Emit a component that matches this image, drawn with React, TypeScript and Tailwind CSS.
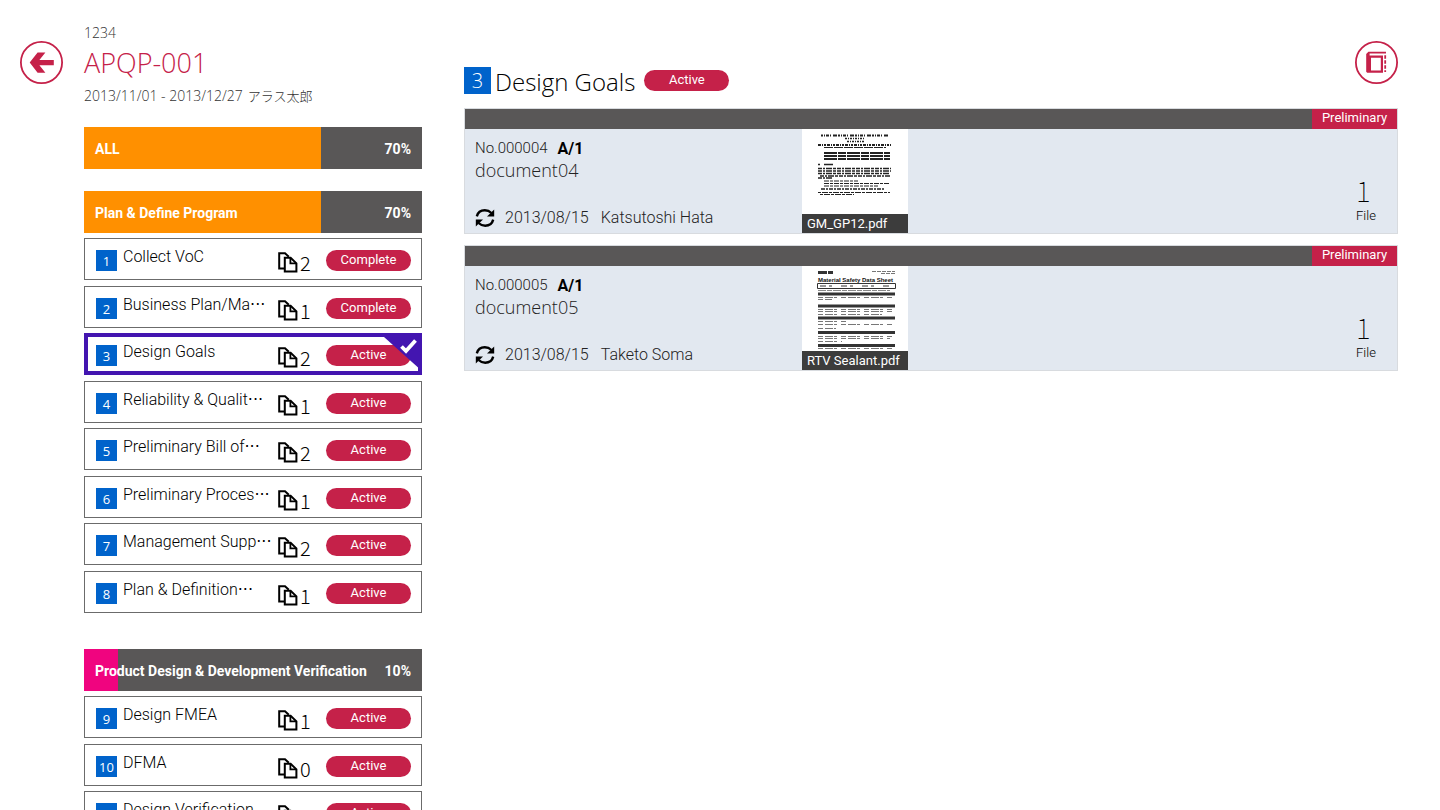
import React, { useState } from 'react';

interface Task {
  no: number;
  name: string;
  more?: boolean;
  files: number;
  status: string;
}

interface Phase {
  name: string;
  progress: number;
  color: string;
  tasks: Task[];
}

interface Doc {
  no: string;
  rev: string;
  name: string;
  date: string;
  owner: string;
  state: string;
  fileName: string;
  fileCount: number;
}

const PHASES: Phase[] = [
  {
    name: 'Plan & Define Program',
    progress: 70,
    color: 'bg-[#ff9000]',
    tasks: [
      { no: 1, name: 'Collect VoC', files: 2, status: 'Complete' },
      { no: 2, name: 'Business Plan/Ma', more: true, files: 1, status: 'Complete' },
      { no: 3, name: 'Design Goals', files: 2, status: 'Active' },
      { no: 4, name: 'Reliability & Qualit', more: true, files: 1, status: 'Active' },
      { no: 5, name: 'Preliminary Bill of', more: true, files: 2, status: 'Active' },
      { no: 6, name: 'Preliminary Proces', more: true, files: 1, status: 'Active' },
      { no: 7, name: 'Management Supp', more: true, files: 2, status: 'Active' },
      { no: 8, name: 'Plan & Definition', more: true, files: 1, status: 'Active' },
    ],
  },
  {
    name: 'Product Design & Development Verification',
    progress: 10,
    color: 'bg-[#f0047f]',
    tasks: [
      { no: 9, name: 'Design FMEA', files: 1, status: 'Active' },
      { no: 10, name: 'DFMA', files: 0, status: 'Active' },
      { no: 11, name: 'Design Verification', files: 1, status: 'Active' },
    ],
  },
];

const DOCS: Doc[] = [
  {
    no: 'No.000004',
    rev: 'A/1',
    name: 'document04',
    date: '2013/08/15',
    owner: 'Katsutoshi Hata',
    state: 'Preliminary',
    fileName: 'GM_GP12.pdf',
    fileCount: 1,
  },
  {
    no: 'No.000005',
    rev: 'A/1',
    name: 'document05',
    date: '2013/08/15',
    owner: 'Taketo Soma',
    state: 'Preliminary',
    fileName: 'RTV Sealant.pdf',
    fileCount: 1,
  },
];

const BackIcon = () => (
  <svg width="43" height="43" viewBox="0 0 43 43" aria-hidden="true">
    <circle cx="21.5" cy="21.5" r="20.6" fill="none" stroke="#c52149" strokeWidth="1.8" />
    <path d="M9.7 21.6 17.6 11.6H25.4L19.4 19H33.8V24.2H19.4L25.4 31.7H17.6Z" fill="#c52149" />
  </svg>
);

const BookIcon = () => (
  <svg width="43" height="43" viewBox="0 0 43 43" fill="none" stroke="#c52149" aria-hidden="true">
    <circle cx="21.5" cy="21.5" r="20.6" strokeWidth="1.8" />
    <path d="M13.4 10.8H31V12.6H14.6V14.6H28V31.8H12.2L11.2 30.8V13ZM16 16.8V29.6H25.8V16.8Z" fill="#c52149" fillRule="evenodd" stroke="none" />
    <path d="M30.2 14.2V31" strokeWidth="1.8" strokeDasharray="3.6 1.4" />
  </svg>
);

const FilesIcon = () => (
  <svg width="20" height="21" viewBox="0 0 20 21" fill="none" stroke="#000" strokeWidth="2" aria-hidden="true">
    <path d="M6 16.4H1.2V1.2H7L10.8 4.8" />
    <path d="M6.8 5.8H12.6L18.4 11.4V19.6H6.8Z" fill="#fff" />
    <path d="M12.4 6V11.4H18.2" strokeWidth="1.8" />
  </svg>
);

const RefreshIcon = () => (
  <svg width="20" height="20" viewBox="0 0 20 20" fill="none" stroke="#000" strokeWidth="2.4" aria-hidden="true">
    <path d="M1.8 8.4C2.8 4.4 6 2.3 9.8 2.3C12.6 2.3 14.6 3.2 16.4 5" />
    <path d="M18.2 11.6C17.2 15.6 14 17.7 10.2 17.7C7.4 17.7 5.4 16.8 3.6 15" />
    <path d="M19.2 1.4V8.6H12Z" fill="#000" stroke="none" />
    <path d="M0.8 18.6V11.4H8Z" fill="#000" stroke="none" />
  </svg>
);

const SpecThumb = () => (
  <svg width="106" height="104" viewBox="0 0 106 104" stroke="#222" aria-hidden="true">
    <rect width="106" height="104" fill="#fff" stroke="none" />
    <path d="M19 6.5H87" strokeWidth="2" strokeDasharray="2 1 1 1 3 1 1 2 4 1" />
    <path d="M43 9.5H63M45 12.5H62" strokeWidth="1.5" strokeDasharray="2 1 1 1" />
    <path d="M16 16H89" strokeWidth="2" strokeDasharray="3 1 1 1 2 1" />
    <path d="M22 18.5H84" strokeWidth="1" strokeDasharray="9 1" />
    <path d="M22 24H88M22 27H88M22 30H88" strokeWidth="2" strokeDasharray="13 1 8 1" />
    <path d="M16 35.5H18M22 35.5H31" strokeWidth="1.6" />
    <path d="M16 39.5H89M16 42H89M16 44.5H87M18 47H88M16 49H30" strokeWidth="1.3" strokeDasharray="4 1 2 1 6 1 3 1" />
    <path d="M22 52H56M22 54.5H87M22 57H76" strokeWidth="1.2" strokeDasharray="5 1 3 1" />
    <path d="M19 60H83" strokeWidth="1.5" strokeDasharray="4 1 2 1" />
    <path d="M16 63.5H88M18 65.5H52" strokeWidth="1" strokeDasharray="3 1 6 1" />
  </svg>
);

const SheetThumb = () => (
  <svg width="106" height="104" viewBox="0 0 106 104" stroke="#333" aria-hidden="true">
    <rect width="106" height="104" fill="#fff" stroke="none" />
    <path d="M16 6.5H31" strokeWidth="3" strokeDasharray="9 1" />
    <path d="M70 5.5H93M79 7.5H93" strokeWidth="1" strokeDasharray="4 1" stroke="#777" />
    <text x="16" y="15.5" fontSize="6" fontWeight="bold" fontFamily="Liberation Sans, sans-serif" fill="#111" stroke="none">
      Material Safety Data Sheet
    </text>
    <path d="M15.5 17.5H93.5V22.5H15.5Z" fill="none" strokeWidth="1" />
    <path d="M18 20H90" strokeWidth="1" strokeDasharray="6 3 3 9" />
    <path d="M16 24.5H88" strokeWidth="1" strokeDasharray="8 1 5 1" stroke="#888" />
    <path d="M16 28H93M16 40H93M16 52H93M16 66.5H93M16 79.5H93" strokeWidth="3" />
    <path
      d="M16 31.5H92M16 33.5H30M16 43.5H92M16 45.5H92M16 48.5H80M16 55.5H45M16 58.5H92M16 62.5H34M16 70.5H92M16 72.5H88M16 75.5H40M16 82.5H90"
      strokeWidth="1"
      strokeDasharray="5 2 8 1 3 4"
      stroke="#777"
    />
  </svg>
);

const StatusPill: React.FC<{ label: string }> = ({ label }) => (
  <span className="h-[21px] w-[85px] shrink-0 rounded-[11px] bg-[#c52149] text-center text-[13px] leading-[19px] text-white">
    {label}
  </span>
);

const ProgressBar: React.FC<{ name: string; progress: number; color: string }> = ({ name, progress, color }) => (
  <div className="relative flex h-[42px] items-center justify-between bg-[#595757] px-[11px] pt-px text-sm font-bold text-white">
    <div className={`absolute inset-y-0 left-0 ${color}`} style={{ width: `${progress}%` }} />
    <span className="relative whitespace-nowrap">{name}</span>
    <span className="relative">{progress}%</span>
  </div>
);

const TaskRow: React.FC<{ task: Task; selected: boolean; onSelect: () => void }> = ({ task, selected, onSelect }) => (
  <li className="odd:mb-[6px] even:mb-[5px]">
    <button
      onClick={onSelect}
      className={`relative flex h-[42px] w-full items-center bg-white pr-[11px] pl-3 text-left ${
        selected ? 'outline-4 -outline-offset-4 outline-[#4315b0]' : 'outline-1 -outline-offset-1 outline-[#6b6b6b]'
      }`}
    >
      <span className="mt-[2px] h-[21px] w-[21px] shrink-0 bg-[#0063cb] text-center font-['Open_Sans',sans-serif] text-[13px] leading-[22px] text-white">
        {task.no}
      </span>
      <span className="mb-1 ml-1.5 w-[155px] shrink-0 text-base leading-6 font-light whitespace-nowrap">
        {task.name}
        {task.more && <span className="font-['DejaVu_Sans',sans-serif] leading-none font-normal">···</span>}
      </span>
      <span className="mt-[7px] flex flex-1 items-end gap-0.5 font-['Noto_Sans_CJK_JP',sans-serif] text-xl leading-5 font-light">
        <FilesIcon />
        {task.files}
      </span>
      <span className="mt-[3px] flex">
        <StatusPill label={task.status} />
      </span>
      {selected && (
        <svg className="absolute top-0 right-0" width="38" height="38" viewBox="0 0 38 38" aria-hidden="true">
          <path d="M0 4H38V38Z" fill="#4315b0" />
          <path d="M17.5 13.5 22 18 31.5 7.5" fill="none" stroke="#fff" strokeWidth="3.8" />
        </svg>
      )}
    </button>
  </li>
);

const DocCard: React.FC<{ doc: Doc; thumb: React.ReactNode }> = ({ doc, thumb }) => (
  <article className="border border-[#d8dbdf] bg-[#e2e8f0]">
    <div className="flex h-5 justify-end bg-[#595757]">
      <span className="w-[85px] bg-[#c52149] text-center text-[13px] leading-[18px] text-white">{doc.state}</span>
    </div>
    <div className="flex h-[104px] px-[10px]">
      <div className="flex w-[327px] shrink-0 flex-col pt-[9px]">
        <p className="flex gap-[10px] text-[15px] leading-[21px] font-light text-[#222]">
          {doc.no} <b className="text-base leading-[21px] font-bold text-black">{doc.rev}</b>
        </p>
        <h2 className="font-['Open_Sans',sans-serif] text-lg leading-[22px] font-light text-[#222]">{doc.name}</h2>
        <p className="mt-auto mb-[5px] flex items-center text-base leading-5 font-light text-[#222]">
          <RefreshIcon />
          <span className="ml-[10px]">{doc.date}</span>
          <span className="ml-3">{doc.owner}</span>
        </p>
      </div>
      <a href="#file" className="relative w-[106px] shrink-0">
        {thumb}
        <span className="absolute inset-x-0 bottom-0 h-[19px] bg-[#3c3c3c] pl-[5px] text-[13px] leading-[19px] whitespace-nowrap text-white">
          {doc.fileName}
        </span>
      </a>
      <div className="mt-auto mr-[9px] mb-[9px] ml-auto w-[22px] font-light">
        <div className="font-['Noto_Sans_CJK_JP',sans-serif] text-[28px] leading-[36px] font-thin">{doc.fileCount}</div>
        <div className="text-[13px] leading-4">File</div>
      </div>
    </div>
  </article>
);

export default function App() {
  const [selected, setSelected] = useState(3);
  const current = PHASES.flatMap((p) => p.tasks).find((t) => t.no === selected)!;

  return (
    <div className="flex h-screen overflow-hidden bg-white pr-[42px] pl-5 font-['Roboto','Noto_Sans_CJK_JP',sans-serif] text-black">
      <button aria-label="Back" className="mt-[41px] mr-[21px] h-[43px] w-[43px] shrink-0">
        <BackIcon />
      </button>

      {/* Project and task list */}
      <aside className="w-[338px] shrink-0">
        <header className="pt-[23px] font-['Open_Sans','Noto_Sans_CJK_JP',sans-serif] font-light text-[#333]">
          <p className="text-sm leading-5">1234</p>
          <h1 className="text-[27px] leading-10 text-[#c52149]">APQP-001</h1>
          <p className="flex gap-[5px] text-sm leading-[26px]">
            <span>2013/11/01 - 2013/12/27</span>
            <span className="text-[13px] leading-[26px]">アラス太郎</span>
          </p>
        </header>
        <div className="mt-[18px]">
          <ProgressBar name="ALL" progress={70} color="bg-[#ff9000]" />
        </div>
        {PHASES.map((phase) => (
          <section key={phase.name} className="mt-[22px] mb-9">
            <ProgressBar name={phase.name} progress={phase.progress} color={phase.color} />
            <ul className="mt-[5px]">
              {phase.tasks.map((task) => (
                <TaskRow key={task.no} task={task} selected={task.no === selected} onSelect={() => setSelected(task.no)} />
              ))}
            </ul>
          </section>
        ))}
      </aside>

      {/* Selected task documents */}
      <main className="ml-[42px] min-w-0 flex-1">
        <header className="flex pt-[41px]">
          <div className="flex flex-1 pt-[26px]">
            <span className="h-[27px] w-[27px] bg-[#0063cb] text-center font-['Open_Sans',sans-serif] text-xl leading-[27px] font-light text-white">
              {current.no}
            </span>
            <h1 className="mr-[9px] ml-1 font-['Open_Sans',sans-serif] text-2xl leading-[30px] font-light">{current.name}</h1>
            <div className="flex items-start pt-[3px]">
              <StatusPill label={current.status} />
            </div>
          </div>
          <button aria-label="Notebook" className="h-[43px] w-[43px]">
            <BookIcon />
          </button>
        </header>
        <div className="mt-[11px] flex flex-col gap-[11px]">
          <DocCard doc={DOCS[0]} thumb={<SpecThumb />} />
          <DocCard doc={DOCS[1]} thumb={<SheetThumb />} />
        </div>
      </main>
    </div>
  );
}
